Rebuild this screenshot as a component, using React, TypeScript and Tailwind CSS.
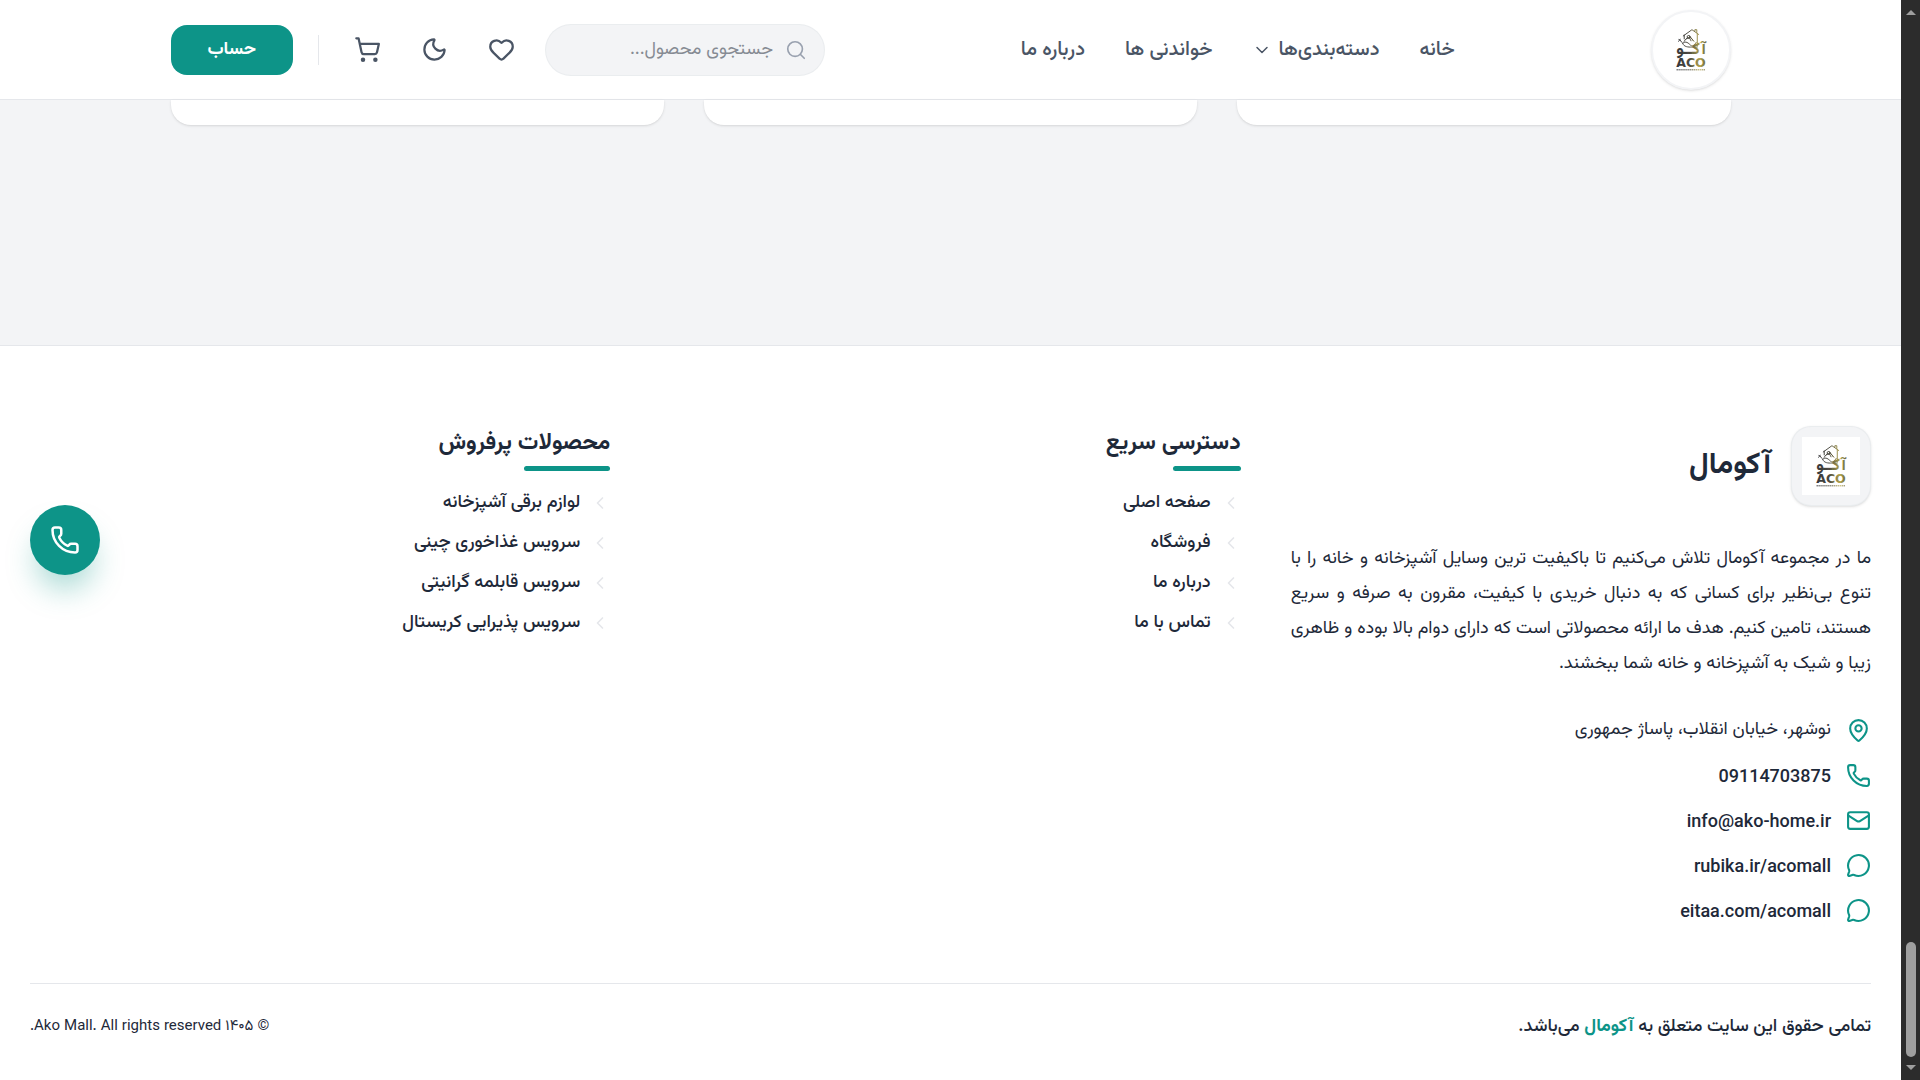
import { useState } from 'react';
import { ChevronDown, ChevronLeft, Heart, Mail, MapPin, MessageCircle, Moon, Phone, Search, ShoppingCart } from 'lucide-react';

const NAV_LINKS = [
    { label: 'خانه', href: '#home' },
    { label: 'دسته‌بندی‌ها', href: '#categories', hasMenu: true },
    { label: 'خواندنی ها', href: '#blog' },
    { label: 'درباره ما', href: '#about' },
];

const FOOTER_COLUMNS = [
    {
        title: 'دسترسی سریع',
        links: ['صفحه اصلی', 'فروشگاه', 'درباره ما', 'تماس با ما'],
    },
    {
        title: 'محصولات پرفروش',
        links: ['لوازم برقی آشپزخانه', 'سرویس غذاخوری چینی', 'سرویس قابلمه گرانیتی', 'سرویس پذیرایی کریستال'],
    },
];

const CONTACTS = [
    { icon: Phone, label: '09114703875', href: 'tel:09114703875' },
    { icon: Mail, label: 'info@ako-home.ir', href: 'mailto:info@ako-home.ir' },
    { icon: MessageCircle, label: 'rubika.ir/acomall', href: '#rubika' },
    { icon: MessageCircle, label: 'eitaa.com/acomall', href: '#eitaa' },
];

function AcoLogo({ id }: { id: string }) {
    return (
        <svg viewBox="0 0 60 60" className="size-[58px]" role="img" aria-label="ACO">
            <defs>
                <linearGradient id={id} x1="14" x2="46" y1="0" y2="0" gradientUnits="userSpaceOnUse">
                    <stop offset="0" stopColor="#33343a" />
                    <stop offset="0.45" stopColor="#4c4b40" />
                    <stop offset="0.8" stopColor="#b5a750" />
                    <stop offset="1" stopColor="#5d5836" />
                </linearGradient>
            </defs>
            <g fill="none" stroke={`url(#${id})`} strokeWidth="1" strokeLinecap="round" strokeLinejoin="round">
                <path d="M22 15.500 31 9l7 5M23 14.500v4M36.500 13v13M34 10.500V9h2v3" />
                <path d="M17.500 19c2 0 2 3 4 4 1 4 6 4 9 4h6" />
                <path d="M23 21c2-4 7-6 9-1M25 18.500c2-2 4-1 5 2M21.500 23c3-3 6 0 8 2s4 0 6-3M28 15l5 6M17 21l2-2" />
                <circle cx="27.500" cy="16.500" r="1.500" />
            </g>
            <text x="30" y="34" textAnchor="middle" fill={`url(#${id})`} className="font-['Vazirmatn','DejaVu_Sans',sans-serif] text-[17px] font-bold">آکــو</text>
            <text x="30" y="48" textAnchor="middle" fill={`url(#${id})`} className="font-['DejaVu_Sans',sans-serif] text-[13px] font-bold">ACO</text>
            <path d="M15 50.500h30" stroke={`url(#${id})`} strokeWidth="1" strokeDasharray="1.500 0.500" />
        </svg>
    );
}

function Header() {
    const [query, setQuery] = useState('');

    return (
        <header className="bg-white border-b border-gray-200">
            <div className="mx-auto flex h-[99px] w-full max-w-[1600px] items-center justify-between px-5">
                <a href="#home" className="flex size-20 items-center justify-center rounded-full border-2 border-gray-100 bg-white shadow-sm">
                    <AcoLogo id="aco-header" />
                </a>

                <nav className="flex items-center gap-10 text-xl font-medium text-gray-600">
                    {NAV_LINKS.map((link) => (
                        <a key={link.label} href={link.href} className="flex items-center gap-1.5">
                            {link.label}
                            {link.hasMenu && <ChevronDown className="size-5" strokeWidth={1.8} />}
                        </a>
                    ))}
                </nav>

                <div className="flex items-center gap-5">
                    <div className="relative">
                        <Search className="absolute right-[18px] top-1/2 size-[22px] -translate-y-1/2 text-gray-400" strokeWidth={1.8} />
                        <input
                            type="text"
                            aria-label="جستجو"
                            value={query}
                            onChange={(e) => setQuery(e.target.value)}
                            placeholder="جستجوی محصول..."
                            className="h-[52px] w-[280px] rounded-full border border-gray-200/60 bg-gray-100 pl-4 pr-[51px] text-lg text-gray-700 placeholder:text-[#868b93]"
                        />
                    </div>
                    <button aria-label="علاقه‌مندی‌ها" className="p-2.5 text-gray-600">
                        <Heart className="size-[27px]" strokeWidth={2} />
                    </button>
                    <button aria-label="حالت شب" className="p-2.5 text-gray-600">
                        <Moon className="size-[27px]" strokeWidth={2} />
                    </button>
                    <button aria-label="سبد خرید" className="p-2.5 text-gray-600">
                        <ShoppingCart className="size-[27px]" strokeWidth={2} />
                    </button>
                    <div className="mx-[5px] h-[30px] w-px bg-gray-200" />
                    <button className="h-[50px] rounded-2xl bg-[#0d9488] px-[37px] text-lg font-bold text-white">حساب</button>
                </div>
            </div>
        </header>
    );
}

function FooterAbout() {
    return (
        <div>
            <div className="flex items-center gap-5">
                <div className="flex size-20 items-center justify-center rounded-[20px] border border-gray-200/60 bg-gray-100 shadow-sm">
                    <div className="bg-white">
                        <AcoLogo id="aco-footer" />
                    </div>
                </div>
                <h2 className="text-[30px] leading-10 font-bold text-gray-800">آکومال</h2>
            </div>

            <p className="mt-9 text-justify text-lg leading-[35px] text-gray-800">
                ما در مجموعه آکومال تلاش می‌کنیم تا باکیفیت ترین وسایل آشپزخانه و خانه را با تنوع بی‌نظیر برای کسانی که به دنبال خریدی با کیفیت، مقرون به صرفه و سریع هستند، تامین کنیم. هدف ما ارائه محصولاتی است که دارای دوام بالا بوده و ظاهری زیبا و شیک به آشپزخانه و خانه شما ببخشند.
            </p>

            <ul className="mt-9 flex flex-col gap-5 text-gray-800">
                <li className="flex items-center gap-[15px]">
                    <MapPin className="size-[25px] text-[#0d9488]" strokeWidth={2} />
                    <span className="text-lg leading-[25px]">نوشهر، خیابان انقلاب، پاساژ جمهوری</span>
                </li>
                {CONTACTS.map(({ icon: Icon, label, href }) => (
                    <li key={label}>
                        <a href={href} className="flex items-center gap-[15px]">
                            <Icon className="size-[25px] text-[#0d9488]" strokeWidth={2} />
                            <span dir="ltr" className="font-['Roboto',sans-serif] text-lg leading-[25px] font-medium">{label}</span>
                        </a>
                    </li>
                ))}
            </ul>
        </div>
    );
}

function Footer() {
    return (
        <footer className="border-t border-gray-200 bg-white px-[30px] pt-20 pb-9">
            <div className="grid grid-cols-3 gap-[50px]">
                <FooterAbout />
                {FOOTER_COLUMNS.map((column) => (
                    <div key={column.title}>
                        <h3 className="relative inline-block text-[23px] leading-[34px] font-bold text-gray-800">
                            {column.title}
                            <span className="absolute -bottom-[11px] right-0 h-[5px] w-1/2 rounded-full bg-[#0d9488]" />
                        </h3>
                        <ul className="mt-[30px] flex flex-col gap-[14px] text-lg leading-[26px] font-medium text-gray-800">
                            {column.links.map((label) => (
                                <li key={label}>
                                    <a href="#shop" className="flex items-center gap-2.5">
                                        <ChevronLeft className="size-5 text-gray-200" />
                                        {label}
                                    </a>
                                </li>
                            ))}
                        </ul>
                    </div>
                ))}
            </div>

            <div className="mt-[60px] flex items-center justify-between border-t border-gray-200 pt-[30px] text-gray-800">
                <p className="text-lg leading-[26px] font-medium">
                    تمامی حقوق این سایت متعلق به <span className="font-bold text-[#0d9488]">آکومال</span> می‌باشد.
                </p>
                <p className="text-[15px] leading-[26px]">© ۱۴۰۵ Ako Mall. All rights reserved.</p>
            </div>
        </footer>
    );
}

function ScrollRail() {
    return (
        <div className="sticky top-0 flex h-screen w-[19px] shrink-0 flex-col items-center bg-[#2c2c2c] py-2.5">
            <svg viewBox="0 0 10 5" className="h-[5px] w-2.5 fill-[#9f9f9f]"><path d="M0 5 5 0l5 5z" /></svg>
            <div className="mt-auto mb-2 h-[115px] w-2.5 rounded-full bg-[#9f9f9f]" />
            <svg viewBox="0 0 10 5" className="h-[5px] w-2.5 fill-[#9f9f9f]"><path d="M0 0h10L5 5z" /></svg>
        </div>
    );
}

export default function App() {
    return (
        <div className="flex min-h-screen bg-white font-['Vazirmatn','Roboto','DejaVu_Sans',sans-serif]">
            <div dir="rtl" lang="fa" className="min-w-0 flex-1">
                <Header />

                <main className="bg-gray-100 pb-[220px]">
                    <div className="mx-auto grid w-full max-w-[1600px] grid-cols-3 gap-10 px-5">
                        <div className="h-[25px] rounded-b-[20px] bg-white shadow" />
                        <div className="h-[25px] rounded-b-[20px] bg-white shadow" />
                        <div className="h-[25px] rounded-b-[20px] bg-white shadow" />
                    </div>
                </main>

                <Footer />
            </div>

            <ScrollRail />

            {/* Floating call button */}
            <a
                href="tel:09114703875"
                aria-label="تماس"
                className="fixed left-[30px] top-[505px] flex size-[70px] items-center justify-center rounded-full bg-[#0d9488] text-white shadow-[0_20px_30px_-6px_rgba(13,148,136,0.35)]"
            >
                <Phone className="size-[30px]" strokeWidth={2} />
            </a>
        </div>
    );
}
